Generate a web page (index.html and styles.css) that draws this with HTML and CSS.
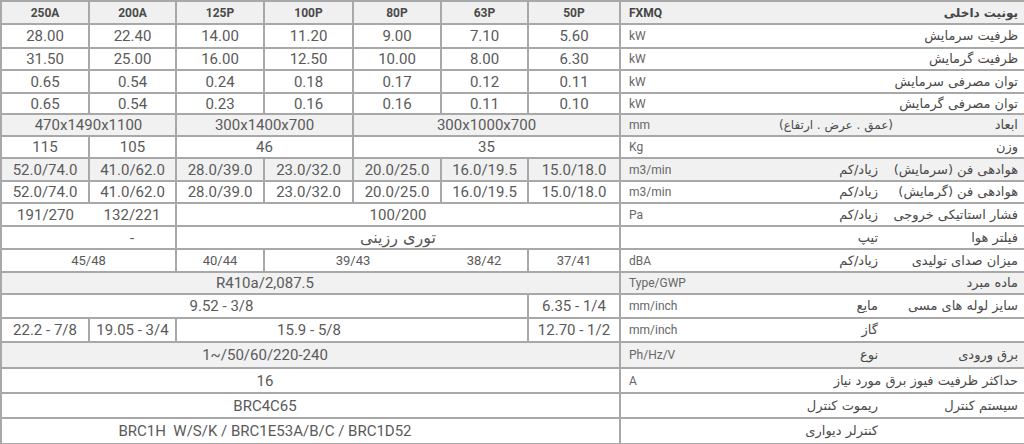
FILE: index.html
```html
<!DOCTYPE html>
<html lang="fa">
<head>
<meta charset="utf-8">
<title>FXMQ</title>
<link rel="stylesheet" href="styles.css">
</head>
<body>
<table class="spec">
  <colgroup>
    <col class="c88"><col class="c87"><col class="c88"><col class="c89"><col class="c88"><col class="c87"><col class="c92"><col class="c405">
  </colgroup>
  <tbody>
    <tr class="head r23">
      <td>250A</td><td>200A</td><td>125P</td><td>100P</td><td>80P</td><td>63P</td><td>50P</td>
      <td class="lab"><div class="lab-in"><span class="unit">FXMQ</span><span class="sub"></span><span class="main">یونیت داخلی</span></div></td>
    </tr>
    <tr class="r24">
      <td>28.00</td><td>22.40</td><td>14.00</td><td>11.20</td><td>9.00</td><td>7.10</td><td>5.60</td>
      <td class="lab"><div class="lab-in"><span class="unit">kW</span><span class="sub"></span><span class="main">ظرفیت سرمایش</span></div></td>
    </tr>
    <tr class="r22">
      <td>31.50</td><td>25.00</td><td>16.00</td><td>12.50</td><td>10.00</td><td>8.00</td><td>6.30</td>
      <td class="lab"><div class="lab-in"><span class="unit">kW</span><span class="sub"></span><span class="main">ظرفیت گرمایش</span></div></td>
    </tr>
    <tr class="r23">
      <td>0.65</td><td>0.54</td><td>0.24</td><td>0.18</td><td>0.17</td><td>0.12</td><td>0.11</td>
      <td class="lab"><div class="lab-in"><span class="unit">kW</span><span class="sub"></span><span class="main">توان مصرفی سرمایش</span></div></td>
    </tr>
    <tr class="r21">
      <td>0.65</td><td>0.54</td><td>0.23</td><td>0.16</td><td>0.16</td><td>0.11</td><td>0.10</td>
      <td class="lab"><div class="lab-in"><span class="unit">kW</span><span class="sub"></span><span class="main">توان مصرفی گرمایش</span></div></td>
    </tr>
    <tr class="shade r22">
      <td colspan="2">470x1490x1100</td><td colspan="2">300x1400x700</td><td colspan="3">300x1000x700</td>
      <td class="lab"><div class="lab-in"><span class="unit">mm</span><span class="sub sub-wide">(عمق . عرض . ارتفاع)</span><span class="main">ابعاد</span></div></td>
    </tr>
    <tr class="r22">
      <td>115</td><td>105</td><td colspan="2">46</td><td colspan="3">35</td>
      <td class="lab"><div class="lab-in"><span class="unit">Kg</span><span class="sub"></span><span class="main">وزن</span></div></td>
    </tr>
    <tr class="shade r23">
      <td>52.0/74.0</td><td>41.0/62.0</td><td>28.0/39.0</td><td>23.0/32.0</td><td>20.0/25.0</td><td>16.0/19.5</td><td>15.0/18.0</td>
      <td class="lab"><div class="lab-in"><span class="unit">m3/min</span><span class="sub">زیاد/کم</span><span class="main">هوادهی فن (سرمایش)</span></div></td>
    </tr>
    <tr class="r22">
      <td>52.0/74.0</td><td>41.0/62.0</td><td>28.0/39.0</td><td>23.0/32.0</td><td>20.0/25.0</td><td>16.0/19.5</td><td>15.0/18.0</td>
      <td class="lab"><div class="lab-in"><span class="unit">m3/min</span><span class="sub">زیاد/کم</span><span class="main">هوادهی فن (گرمایش)</span></div></td>
    </tr>
    <tr class="r23">
      <td class="join">191/270</td><td>132/221</td><td colspan="5">100/200</td>
      <td class="lab"><div class="lab-in"><span class="unit">Pa</span><span class="sub">زیاد/کم</span><span class="main">فشار استاتیکی خروجی</span></div></td>
    </tr>
    <tr class="r23">
      <td class="join"></td><td>-</td><td colspan="5" class="fa">توری رزینی</td>
      <td class="lab"><div class="lab-in"><span class="unit"></span><span class="sub">تیپ</span><span class="main">فیلتر هوا</span></div></td>
    </tr>
    <tr class="small r23">
      <td colspan="2">45/48</td><td>40/44</td><td colspan="2" class="join">39/43</td><td>38/42</td><td>37/41</td>
      <td class="lab"><div class="lab-in"><span class="unit">dBA</span><span class="sub">زیاد/کم</span><span class="main">میزان صدای تولیدی</span></div></td>
    </tr>
    <tr class="shade r22">
      <td colspan="6" class="join">R410a/2,087.5</td><td></td>
      <td class="lab"><div class="lab-in"><span class="unit">Type/GWP</span><span class="sub"></span><span class="main">ماده مبرد</span></div></td>
    </tr>
    <tr class="r24">
      <td colspan="5" class="join">9.52 - 3/8</td><td></td><td>6.35 - 1/4</td>
      <td class="lab"><div class="lab-in"><span class="unit">mm/inch</span><span class="sub">مایع</span><span class="main">سایز لوله های مسی</span></div></td>
    </tr>
    <tr class="r24">
      <td>22.2 - 7/8</td><td>19.05 - 3/4</td><td colspan="3" class="join">15.9 - 5/8</td><td></td><td>12.70 - 1/2</td>
      <td class="lab"><div class="lab-in"><span class="unit">mm/inch</span><span class="sub">گاز</span><span class="main"></span></div></td>
    </tr>
    <tr class="shade r26">
      <td colspan="6" class="join">1~/50/60/220-240</td><td></td>
      <td class="lab"><div class="lab-in"><span class="unit">Ph/Hz/V</span><span class="sub">نوع</span><span class="main">برق ورودی</span></div></td>
    </tr>
    <tr class="r25">
      <td colspan="6" class="join">16</td><td></td>
      <td class="lab"><div class="lab-in"><span class="unit">A</span><span class="main main-long">حداکثر ظرفیت فیوز برق مورد نیاز</span></div></td>
    </tr>
    <tr class="r25">
      <td colspan="6" class="join">BRC4C65</td><td></td>
      <td class="lab"><div class="lab-in"><span class="unit"></span><span class="sub">ریموت کنترل</span><span class="main">سیستم کنترل</span></div></td>
    </tr>
    <tr class="r26">
      <td colspan="6" class="join">BRC1H&nbsp; W/S/K / BRC1E53A/B/C / BRC1D52</td><td></td>
      <td class="lab"><div class="lab-in"><span class="unit"></span><span class="sub">کنترلر دیواری</span><span class="main"></span></div></td>
    </tr>
  </tbody>
</table>
</body>
</html>
```

FILE: styles.css
```css
html, body {
  margin: 0;
  padding: 0;
  background: #ffffff;
}

.spec {
  width: 1024px;
  table-layout: fixed;
  border-collapse: collapse;
  font-family: Roboto, "Liberation Sans", sans-serif;
  font-size: 15px;
  color: #5a5a5a;
}

.c88 { width: 88px; }
.c87 { width: 87px; }
.c89 { width: 89px; }
.c92 { width: 92px; }
.c405 { width: 405px; }

.spec td {
  border: 2px solid #a8a8a8;
  padding: 0;
  text-align: center;
  vertical-align: middle;
  line-height: 18px;
  white-space: nowrap;
  overflow: hidden;
}

.spec td.join {
  border-right-style: hidden;
}

.r21 { height: 21px; }
.r22 { height: 22px; }
.r23 { height: 23px; }
.r24 { height: 24px; }
.r25 { height: 25px; }
.r26 { height: 26px; }

.shade td {
  background: #f1f1f1;
}

.head td {
  background: #f0f0f0;
  font-weight: bold;
  font-size: 12px;
  color: #4a4a4a;
}

.small td {
  font-size: 13px;
}

.spec td.fa {
  font-family: "DejaVu Sans", sans-serif;
  font-size: 16px;
  color: #555;
}

.spec td.lab {
  text-align: left;
  padding: 0 6px 0 8px;
}

.lab-in {
  display: grid;
  grid-template-columns: 1fr auto minmax(140px, max-content);
  align-items: center;
}

.unit {
  font-family: Roboto, "Liberation Sans", sans-serif;
  font-size: 12px;
  color: #666;
  text-align: left;
}

.sub,
.main {
  direction: rtl;
  text-align: right;
  font-family: "DejaVu Sans", sans-serif;
  font-size: 13px;
  line-height: 18px;
  color: #4a4a4a;
}

.main {
  padding-left: 14px;
}

.sub-wide {
  font-size: 12px;
  margin-right: -15px;
}

.main-long {
  grid-column: 2 / 4;
}

.head .unit {
  font-weight: bold;
  color: #444;
}

.head .main {
  font-weight: bold;
  font-size: 12px;
  color: #444;
}
```
